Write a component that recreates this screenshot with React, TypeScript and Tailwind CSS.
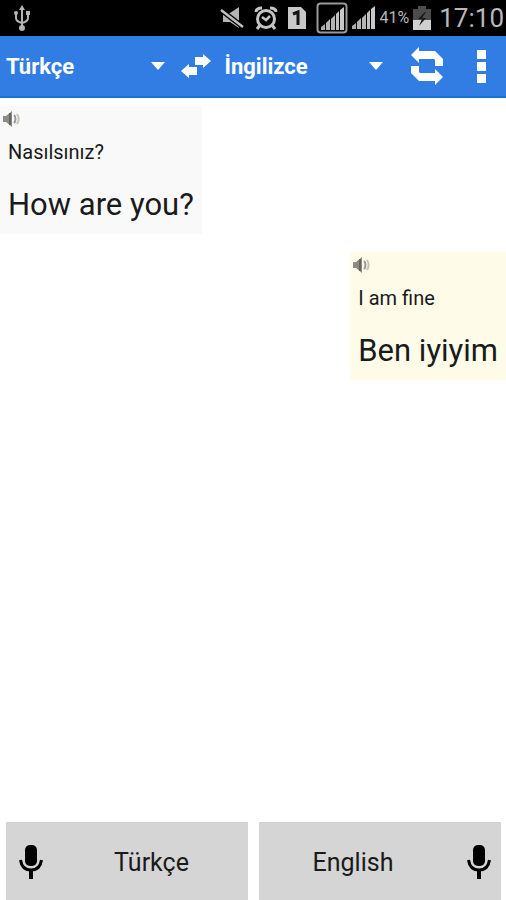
import { useState } from "react";

const UsbIcon = () => (
  <svg width="18" height="28" viewBox="0 0 18 28" fill="none" stroke="#b4b4b4" strokeWidth="2" aria-hidden="true">
    <path d="M9 5v18M3 10v4c0 3 2 4 6 5M15 10v4c0 3-2 4-6 5" />
    <path d="M9 1l3 5H6z" fill="#b4b4b4" stroke="none" />
    <circle cx="3" cy="9" r="2" fill="#b4b4b4" stroke="none" />
    <path d="M13 7h4v4h-4z" fill="#b4b4b4" stroke="none" />
    <circle cx="9" cy="24" r="3" fill="#b4b4b4" stroke="none" />
  </svg>
);

const MuteIcon = () => (
  <svg width="24" height="24" viewBox="0 0 24 24" fill="#b4b4b4" aria-hidden="true">
    <path d="M3 7h7l9-6v21l-9-6H3z" />
    <path d="M1 4l22 17" stroke="#000" strokeWidth="5" />
    <path d="M1 4l22 17" stroke="#c0c0c0" strokeWidth="2.5" />
  </svg>
);

const AlarmIcon = () => (
  <svg width="24" height="26" viewBox="0 0 24 26" fill="none" stroke="#c4c4c4" strokeWidth="3" aria-hidden="true">
    <circle cx="12" cy="14" r="8.5" />
    <path d="M8 12l4 3 4-4" strokeWidth="2.5" />
    <path d="M2 7c0-3 2-4 6-4M22 7c0-3-2-4-6-4M6 20l-3 4M18 20l3 4" />
  </svg>
);

const SimIcon = () => (
  <svg width="18" height="22" viewBox="0 0 18 22" aria-hidden="true">
    <path d="M0 0h13l5 5v17H0z" fill="#c8c8c8" />
    <path d="M5 7l5-2v13" fill="none" stroke="#111" strokeWidth="3" />
  </svg>
);

const SignalBars = () => (
  <>
    <path d="M0 24v-3l4-3v6z" fill="#aaa" />
    <path d="M5 24v-7l4-4v11z" fill="#b4b4b4" />
    <path d="M10 24V13l4-4v15z" fill="#b4b4b4" />
    <path d="M15 24V8l3-3v19z" fill="#c0c0c0" />
    <path d="M19 24V4l4-3v23z" fill="#c8c8c8" />
  </>
);

const BoxedSignalIcon = () => (
  <svg width="32" height="32" viewBox="0 0 32 32" aria-hidden="true">
    <rect x="1.5" y="1.5" width="29" height="29" rx="3" fill="none" stroke="#999" strokeWidth="2" />
    <g transform="translate(5 4)">
      <SignalBars />
    </g>
  </svg>
);

const SignalIcon = () => (
  <svg width="24" height="26" viewBox="0 0 24 26" aria-hidden="true">
    <SignalBars />
  </svg>
);

const BatteryIcon = () => (
  <svg width="18" height="24" viewBox="0 0 18 24" aria-hidden="true">
    <path d="M5 0h8v3h5v11H0V3h5z" fill="#4c4c4c" />
    <path d="M0 14h18v10H0z" fill="#d0d0d0" />
    <path d="M12 6l-7 7h4l-3 7 7-8h-4l4-6z" fill="#181818" />
  </svg>
);

const SpeakerIcon = () => (
  <svg width="18" height="18" viewBox="0 0 18 18" fill="none" aria-hidden="true">
    <path d="M0 6h3l6-5v16l-6-5H0z" fill="#8c8c84" />
    <path d="M7 3v12" stroke="#66665f" strokeWidth="2" />
    <path d="M11 5c2 2 2 6 0 8" stroke="#999" strokeWidth="2" />
    <path d="M14 4c2 3 2 7 0 10" stroke="#c4c4bf" strokeWidth="2" />
  </svg>
);

const SwapIcon = () => (
  <svg width="30" height="24" viewBox="0 0 30 24" fill="#fff" aria-hidden="true">
    <path d="M14 3h8V0l8 7-8 7v-3h-8z" />
    <path d="M16 13v8H8v3l-8-7 8-7v3z" />
  </svg>
);

const RefreshIcon = () => (
  <svg width="32" height="38" viewBox="0 0 32 38" fill="#fff" aria-hidden="true">
    <path d="M0 8l8-8v4h16l8 8v7h-8v-6l-1-1H8v4z" />
    <path d="M32 30l-8 8v-4H8l-8-8v-7h8v6l1 1h15v-4z" />
  </svg>
);

const MicIcon = () => (
  <svg width="24" height="36" viewBox="0 0 24 36" fill="none" stroke="#000" aria-hidden="true">
    <rect x="6" y="0" width="12" height="21" rx="5" fill="#000" stroke="none" />
    <path d="M1.5 15c1 7 5 10 10.5 10s9.5-3 10.5-10" strokeWidth="3" />
    <path d="M12 25v9" strokeWidth="4" />
  </svg>
);

const LanguageSelect = ({
  label,
  value,
  onChange,
}: {
  label: string;
  value: string;
  onChange: (value: string) => void;
}) => (
  <div className="grid flex-1 items-center">
    <select
      aria-label={label}
      value={value}
      onChange={(e) => onChange(e.target.value)}
      className="col-start-1 row-start-1 h-10 w-full appearance-none bg-transparent text-[22px] font-bold text-white"
    >
      <option className="text-black">Türkçe</option>
      <option className="text-black">İngilizce</option>
    </select>
    <svg
      className="pointer-events-none col-start-1 row-start-1 mr-2 justify-self-end"
      width="14"
      height="8"
      viewBox="0 0 14 8"
      fill="#fff"
      aria-hidden="true"
    >
      <path d="M0 0h14L7 8z" />
    </svg>
  </div>
);

const Message = ({ source, translation, className }: { source: string; translation: string; className: string }) => (
  <div className={`h-32 pt-1 ${className}`}>
    <button className="ml-[3px] block cursor-pointer" aria-label="Dinle">
      <SpeakerIcon />
    </button>
    <p className="mt-3 px-2 text-xl leading-6">{source}</p>
    <p className="mt-[21px] px-2 text-[31px] leading-10">{translation}</p>
  </div>
);

const App = () => {
  const [from, setFrom] = useState("Türkçe");
  const [to, setTo] = useState("İngilizce");

  function swap() {
    setFrom(to);
    setTo(from);
  }

  return (
    <div className="flex min-h-screen flex-col bg-white font-[Roboto,sans-serif] text-[#1a1a1a]">
      {/* Status bar */}
      <div className="flex h-9 items-center justify-between bg-black pr-[2px] pl-[13px] text-[#b8b8b8]">
        <UsbIcon />
        <div className="flex items-center">
          <div className="mr-1 flex items-center gap-[10px]">
            <MuteIcon />
            <AlarmIcon />
            <SimIcon />
            <BoxedSignalIcon />
          </div>
          <SignalIcon />
          <span className="mx-1 text-base">41%</span>
          <BatteryIcon />
          <span className="ml-2 text-[26px]">17:10</span>
        </div>
      </div>

      {/* Toolbar */}
      <header className="flex h-[62px] items-center border-b-2 border-[#1674d6] bg-[#317de4] pr-5 pl-[6px]">
        <LanguageSelect label="Kaynak dil" value={from} onChange={setFrom} />
        <button onClick={swap} className="mr-[14px] ml-2 cursor-pointer" aria-label="Değiştir">
          <SwapIcon />
        </button>
        <LanguageSelect label="Hedef dil" value={to} onChange={setTo} />
        <button className="ml-5 cursor-pointer" aria-label="Yenile">
          <RefreshIcon />
        </button>
        <button className="ml-[34px] flex cursor-pointer flex-col gap-[3px]" aria-label="Menü">
          <span className="size-[9px] bg-white"></span>
          <span className="size-[9px] bg-white"></span>
          <span className="size-[9px] bg-white"></span>
        </button>
      </header>

      {/* Conversation */}
      <main className="flex flex-1 flex-col gap-[18px] pt-2">
        <Message source="Nasılsınız?" translation="How are you?" className="self-start bg-[#f9f9f9]" />
        <Message source="I am fine" translation="Ben iyiyim" className="self-end bg-[#fffbe9]" />
      </main>

      {/* Speak buttons */}
      <footer className="grid grid-cols-2 gap-[11px] pr-[5px] pl-[6px] text-[25px]">
        <button className="flex h-[78px] cursor-pointer items-center gap-3 bg-[#d5d5d5] pt-1 pl-[13px]">
          <MicIcon />
          <span className="flex-1 text-center">Türkçe</span>
        </button>
        <button className="flex h-[78px] cursor-pointer items-center gap-5 bg-[#d5d5d5] pt-1 pr-[10px]">
          <span className="flex-1 text-center">English</span>
          <MicIcon />
        </button>
      </footer>
    </div>
  );
};

export default App;
